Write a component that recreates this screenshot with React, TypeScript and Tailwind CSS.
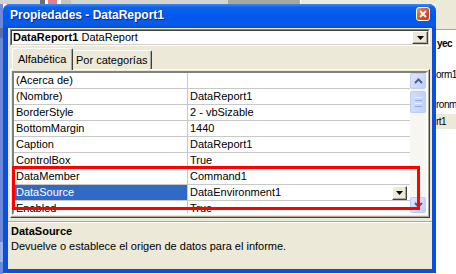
import React from 'react';

const rows: [string, string][] = [
  ['(Acerca de)', ''],
  ['(Nombre)', 'DataReport1'],
  ['BorderStyle', '2 - vbSizable'],
  ['BottomMargin', '1440'],
  ['Caption', 'DataReport1'],
  ['ControlBox', 'True'],
  ['DataMember', 'Command1'],
  ['DataSource', 'DataEnvironment1'],
  ['Enabled', 'True'],
];

function DropTriangle() {
  return (
    <svg width="7" height="4" viewBox="0 0 7 4">
      <polygon points="0,0 7,0 3.5,4" fill="#000" />
    </svg>
  );
}

function ClassicButton({ className }: { className: string }) {
  return (
    <div
      className={`flex items-center justify-center border border-t-white border-l-white border-r-[#404040] border-b-[#404040] bg-[#ece9d8] shadow-[inset_-1px_-1px_0_#aca899] ${className}`}
    >
      <DropTriangle />
    </div>
  );
}

function ScrollArrow({ up }: { up?: boolean }) {
  return (
    <div className="flex h-[16px] w-full items-center justify-center rounded-[2px] border border-[#bccdf6] bg-[linear-gradient(135deg,#dde7fd,#bccefa)]">
      <svg width="9" height="6" viewBox="0 0 9 6">
        <path
          d={up ? 'M1 5 L4.5 1.5 L8 5' : 'M1 1 L4.5 4.5 L8 1'}
          fill="none"
          stroke="#4d6185"
          strokeWidth="2"
        />
      </svg>
    </div>
  );
}

function Scrollbar() {
  return (
    <div className="flex w-[16px] shrink-0 flex-col bg-[#f7f6f1]">
      <ScrollArrow up />
      <div className="mt-[2px] flex h-[22px] flex-col items-center justify-center gap-[2px] rounded-[2px] border border-[#bccdf6] bg-[linear-gradient(90deg,#cfdcfd,#c0d1fb)]">
        <div className="h-px w-[7px] bg-[#eef3ff]" />
        <div className="h-px w-[7px] bg-[#8fa9e4]" />
        <div className="h-px w-[7px] bg-[#eef3ff]" />
        <div className="h-px w-[7px] bg-[#8fa9e4]" />
      </div>
      <div className="flex-1" />
      <ScrollArrow />
    </div>
  );
}

function PropertyGrid() {
  return (
    <div className="flex h-[144px] border-2 border-t-[#808080] border-l-[#808080] border-r-white border-b-white">
      <div className="flex min-w-0 flex-1 overflow-hidden bg-white">
        <div className="flex min-w-0 flex-1 flex-col">
          {rows.map(([name, value]) => {
            const selected = name === 'DataSource';
            return (
              <div key={name} className="flex h-[16px] shrink-0 border-b border-[#c8c8c8]">
                <div
                  className={`flex w-[174px] shrink-0 items-center border-r border-[#c8c8c8] pl-[2px] leading-[15px] ${
                    selected ? 'bg-[#316ac5] text-white' : ''
                  }`}
                >
                  {name}
                </div>
                <div className="flex min-w-0 flex-1 items-center justify-between pl-[2px] leading-[15px]">
                  <span>{value}</span>
                  {selected && <ClassicButton className="mr-[3px] h-[14px] w-[15px]" />}
                </div>
              </div>
            );
          })}
        </div>
        <Scrollbar />
      </div>
    </div>
  );
}

export default function App() {
  return (
    <div className="relative flex h-[274px] w-[456px] flex-col overflow-hidden bg-white font-['Liberation_Sans',Arial,sans-serif] text-[11px] text-black">
      {/* strip of the window behind, at the top */}
      <div className="flex h-[4px] shrink-0 bg-[#d6d3ce]">
        <div className="w-[40px]" />
        <div className="w-[5px] bg-[#6f6f6f]" />
        <div className="w-[3px] bg-white" />
        <div className="w-[9px] bg-[#d9828a]" />
        <div className="w-[4px] bg-white" />
        <div className="w-[10px] bg-[#c7c3bb]" />
        <div className="w-[157px]" />
        <div className="w-[72px] bg-[#aca899]" />
        <div className="w-px bg-white" />
        <div className="flex-1 bg-[#ece9d8]" />
      </div>

      <div className="flex min-h-0 flex-1">
        <div className="flex w-[3px] shrink-0 flex-col bg-[#6c89d8]">
          <div className="h-[24px]" />
          <div className="h-[10px] bg-[#5b6ea8]" />
          <div className="flex-1" />
          <div className="h-[20px] bg-[#9ab1ea]" />
          <div className="h-[12px]" />
        </div>

        {/* Properties window */}
        <div className="flex h-[269px] w-[433px] shrink-0 flex-col rounded-t-[7px] bg-[#0c4fdd]">
          <div className="flex h-[24px] shrink-0 items-start justify-between rounded-t-[7px] bg-[linear-gradient(180deg,#3b8cf6_0%,#0d62ea_14%,#0058ee_50%,#0a5ae8_85%,#0650d8_100%)] pl-[7px] pr-[6px]">
            <span className="mt-[4px] text-[12px] leading-[15px] font-bold text-white [text-shadow:1px_1px_0_#0a2a8a]">
              Propiedades - DataReport1
            </span>
            <div className="mt-[3px] flex h-[14px] w-[14px] items-center justify-center rounded-[3px] border border-white bg-[linear-gradient(135deg,#ee9070,#d8552e_50%,#c03c18)]">
              <svg width="8" height="8" viewBox="0 0 8 8">
                <path d="M1 1 L7 7 M7 1 L1 7" stroke="#fff" strokeWidth="1.8" />
              </svg>
            </div>
          </div>

          <div className="mb-[4px] ml-[5px] mr-[4px] flex min-h-0 flex-1 flex-col bg-[#ece9d8]">
            {/* object combo */}
            <div className="mx-[2px] mt-[1px] h-[17px] shrink-0 border border-t-[#808080] border-l-[#808080] border-r-white border-b-white">
              <div className="flex h-full items-center justify-between border border-t-[#404040] border-l-[#404040] border-r-[#d4d0c8] border-b-[#d4d0c8] bg-white pl-[1px]">
                <span className="leading-[13px]">
                  <b>DataReport1</b> DataReport
                </span>
                <ClassicButton className="h-[13px] w-[16px]" />
              </div>
            </div>

            {/* tabs */}
            <div className="mx-[2px] mt-[1px] flex h-[22px] shrink-0 items-end pl-[2px]">
              <div className="relative z-10 -mb-px flex h-[22px] w-[61px] items-center rounded-t-[2px] border border-b-0 border-t-white border-l-white border-r-[#404040] bg-[#ece9d8] pl-[5px] shadow-[inset_-1px_0_0_#aca899]">
                Alfabética
              </div>
              <div className="flex h-[19px] w-[79px] items-center rounded-t-[2px] border border-b-0 border-l-0 border-t-white border-r-[#404040] bg-[#ece9d8] pl-[3px] shadow-[inset_-1px_0_0_#aca899]">
                Por categorías
              </div>
            </div>

            {/* tab page */}
            <div className="mx-[2px] h-[149px] shrink-0 border border-t-white border-l-white border-r-[#404040] border-b-[#404040] p-px shadow-[inset_-1px_-1px_0_#aca899]">
              <PropertyGrid />
            </div>

            {/* description */}
            <div className="mt-[3px] flex flex-1 flex-col border-t border-[#aca899] px-[3px] pt-[2px] shadow-[inset_0_1px_0_#fff]">
              <span className="leading-[15px] font-bold">DataSource</span>
              <span className="leading-[15px]">
                Devuelve o establece el origen de datos para el informe.
              </span>
            </div>
          </div>
        </div>

        {/* project window behind, on the right */}
        <div className="flex min-w-0 flex-1 flex-col overflow-hidden whitespace-nowrap text-[10px] tracking-[-0.5px]">
          <div className="h-[25px] shrink-0 bg-[#ece9d8]" />
          <div className="h-px shrink-0 bg-[#aca899]" />
          <div className="mt-[7px] h-[14px] pl-px leading-[14px] font-bold">yec</div>
          <div className="mt-[17px] h-[14px] leading-[14px]">orm1</div>
          <div className="mt-[16px] h-[14px] leading-[14px]">ronm</div>
          <div className="mt-[2px] h-[15px] bg-[#ece9d8] leading-[15px]">rt1</div>
        </div>
      </div>

      {/* red annotation rectangle */}
      <div className="pointer-events-none absolute left-[12px] top-[166px] h-[44px] w-[408px] border-[3px] border-[#f00]" />
    </div>
  );
}
